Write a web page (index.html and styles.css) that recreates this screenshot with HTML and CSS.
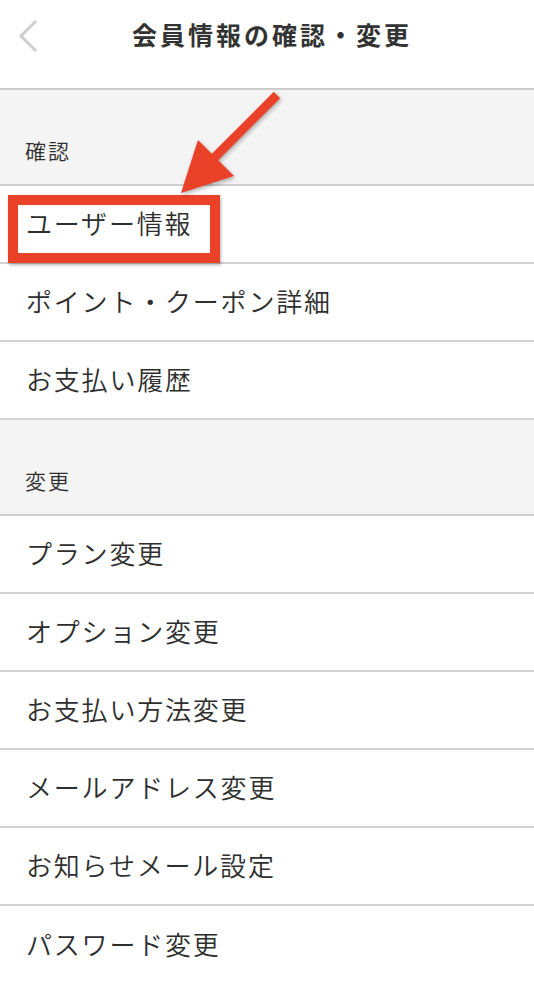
FILE: index.html
```html
<!DOCTYPE html>
<html lang="ja">
<head>
<meta charset="utf-8">
<title>会員情報の確認・変更</title>
<link rel="stylesheet" href="styles.css">
</head>
<body>
<div class="page">
  <header class="header">
    <svg class="back" width="22" height="34" viewBox="0 0 22 34"><polyline points="19,2 4,17 19,32" fill="none" stroke="#cfcfcf" stroke-width="3"/></svg>
    <h1 class="title">会員情報の確認・変更</h1>
  </header>
  <div class="section">確認</div>
  <div class="row">ユーザー情報</div>
  <div class="row">ポイント・クーポン詳細</div>
  <div class="row">お支払い履歴</div>
  <div class="section">変更</div>
  <div class="row">プラン変更</div>
  <div class="row">オプション変更</div>
  <div class="row">お支払い方法変更</div>
  <div class="row">メールアドレス変更</div>
  <div class="row">お知らせメール設定</div>
  <div class="row last">パスワード変更</div>

  <div class="highlight"></div>
  <svg class="arrow" width="534" height="220" viewBox="0 0 534 220">
    <line x1="277" y1="95" x2="212" y2="160" stroke="#ea4129" stroke-width="9"/>
    <polygon points="198,140 234,176 181,193" fill="#ea4129"/>
  </svg>
</div>
</body>
</html>
```
FILE: styles.css
```css
html, body {
  margin: 0;
  padding: 0;
  background: #fff;
}
body {
  font-family: "Noto Sans CJK JP", "Noto Sans", sans-serif;
  color: #2e2e2e;
}
.page {
  position: relative;
  width: 534px;
  overflow: hidden;
}
.header {
  height: 88px;
  border-bottom: 2px solid #cacaca;
  display: flex;
  align-items: flex-start;
  justify-content: center;
  position: relative;
}
.back {
  position: absolute;
  left: 17px;
  top: 19px;
}
.title {
  margin: 14px 0 0 0;
  font-size: 25px;
  font-weight: 700;
  letter-spacing: 3px;
  line-height: 40px;
  color: #333;
  padding-left: 10px;
}
.section {
  height: 96px;
  box-sizing: border-box;
  background: #f4f4f4;
  border-bottom: 2px solid #cfcfcf;
  display: flex;
  align-items: flex-end;
  padding: 0 0 16px 25px;
  font-size: 21px;
  font-weight: 350;
  letter-spacing: 2px;
  line-height: 36px;
}
.row {
  height: 78px;
  box-sizing: border-box;
  border-bottom: 2px solid #d2d2d2;
  display: flex;
  align-items: center;
  padding: 0 0 2px 26px;
  font-size: 26px;
  font-weight: 350;
  letter-spacing: 1.8px;
  line-height: 36px;
}
.row.last {
  border-bottom: none;
}
.highlight {
  position: absolute;
  left: 8px;
  top: 195px;
  width: 212px;
  height: 68px;
  box-sizing: border-box;
  border: 10px solid #ea4129;
  box-shadow: 1px 2px 3px rgba(0,0,0,0.3);
}
.arrow {
  position: absolute;
  left: 0;
  top: 0;
  filter: drop-shadow(1px 2px 2px rgba(0,0,0,0.3));
}
```
